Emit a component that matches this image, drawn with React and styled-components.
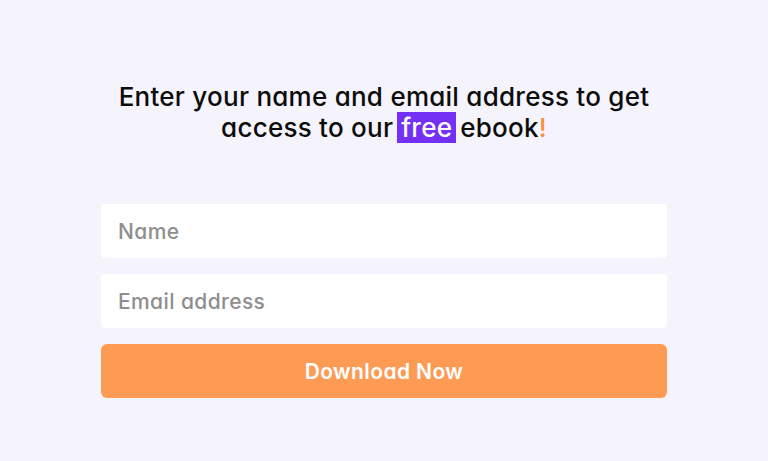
import React from "react";
import styled, { createGlobalStyle } from "styled-components";

const Global = createGlobalStyle`
  html, body { margin: 0; padding: 0; background: #f5f3fb; }
  body { font-family: Inter, "Noto Sans", sans-serif; font-feature-settings: "cv11" 1; }
`;

const Page = styled.main`
  width: 768px;
  height: 461px;
  box-sizing: border-box;
  padding-top: 81px;
  display: flex;
  flex-direction: column;
  align-items: center;
`;

const Heading = styled.h1`
  margin: 0;
  width: 566px;
  text-align: center;
  font-size: 26px;
  font-weight: 500;
  line-height: 31px;
  color: #0c0c0c;
  letter-spacing: 0.25px;
`;

const Highlight = styled.span`
  background: #7430f5;
  color: #ffffff;
  padding: 0 4px;
  margin: 0 4px;
`;

const Bang = styled.span`
  color: #fb8f45;
`;

const Form = styled.form`
  margin-top: 61px;
  width: 566px;
  display: flex;
  flex-direction: column;
  gap: 16px;
`;

const Input = styled.input`
  box-sizing: border-box;
  height: 54px;
  width: 100%;
  border: none;
  border-radius: 4px;
  background: #ffffff;
  padding: 0 17px;
  font-family: inherit;
  font-feature-settings: "cv11" 1;
  font-size: 21px;
  font-weight: 500;
  letter-spacing: 0.4px;
  color: #222;
  outline: none;
  &::placeholder { color: #8e8e8e; }
`;

const Button = styled.button`
  height: 54px;
  width: 100%;
  border: none;
  border-radius: 6px;
  background: #fd9b55;
  color: #ffffff;
  font-family: inherit;
  font-feature-settings: "cv11" 1;
  font-size: 21px;
  font-weight: 600;
  letter-spacing: 0.4px;
  cursor: pointer;
`;

export default function App() {
  return (
    <>
      <Global />
      <Page>
        <Heading>
          Enter your name and email address to get access to our
          <Highlight>free</Highlight>ebook<Bang>!</Bang>
        </Heading>
        <Form onSubmit={(e) => e.preventDefault()}>
          <Input placeholder="Name" />
          <Input placeholder="Email address" />
          <Button type="submit">Download Now</Button>
        </Form>
      </Page>
    </>
  );
}
